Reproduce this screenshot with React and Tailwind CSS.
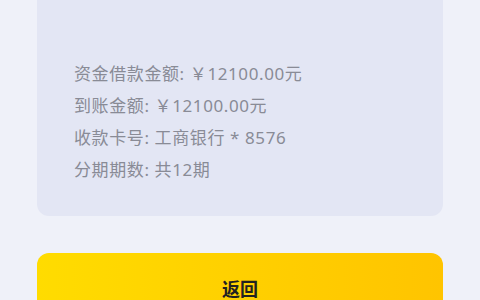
export default function App() {
  const rows = [
    "资金借款金额: ￥12100.00元",
    "到账金额: ￥12100.00元",
    "收款卡号: 工商银行 * 8576",
    "分期期数: 共12期",
  ];

  return (
    <div
      className="h-[300px] overflow-hidden bg-[#eff1f9]"
      style={{ fontFamily: '"Noto Sans", "Noto Sans CJK SC", sans-serif' }}
    >
      <div className="mx-[37px]">

        <div className="h-[216px] rounded-b-[12px] bg-[#e3e6f4] pl-[37px] pt-[58px]">
          {rows.map((row, i) => (
            <p key={i} className="text-[17px] leading-[32px] tracking-[0.6px] text-[#898b96]">
              {row}
            </p>
          ))}
        </div>

        <button className="mt-[37px] flex h-[72px] w-full items-center justify-center rounded-[12px] bg-gradient-to-r from-[#ffdc00] to-[#ffc400] text-[18px] font-bold text-[#222222]">
          返回
        </button>

      </div>
    </div>
  );
}
